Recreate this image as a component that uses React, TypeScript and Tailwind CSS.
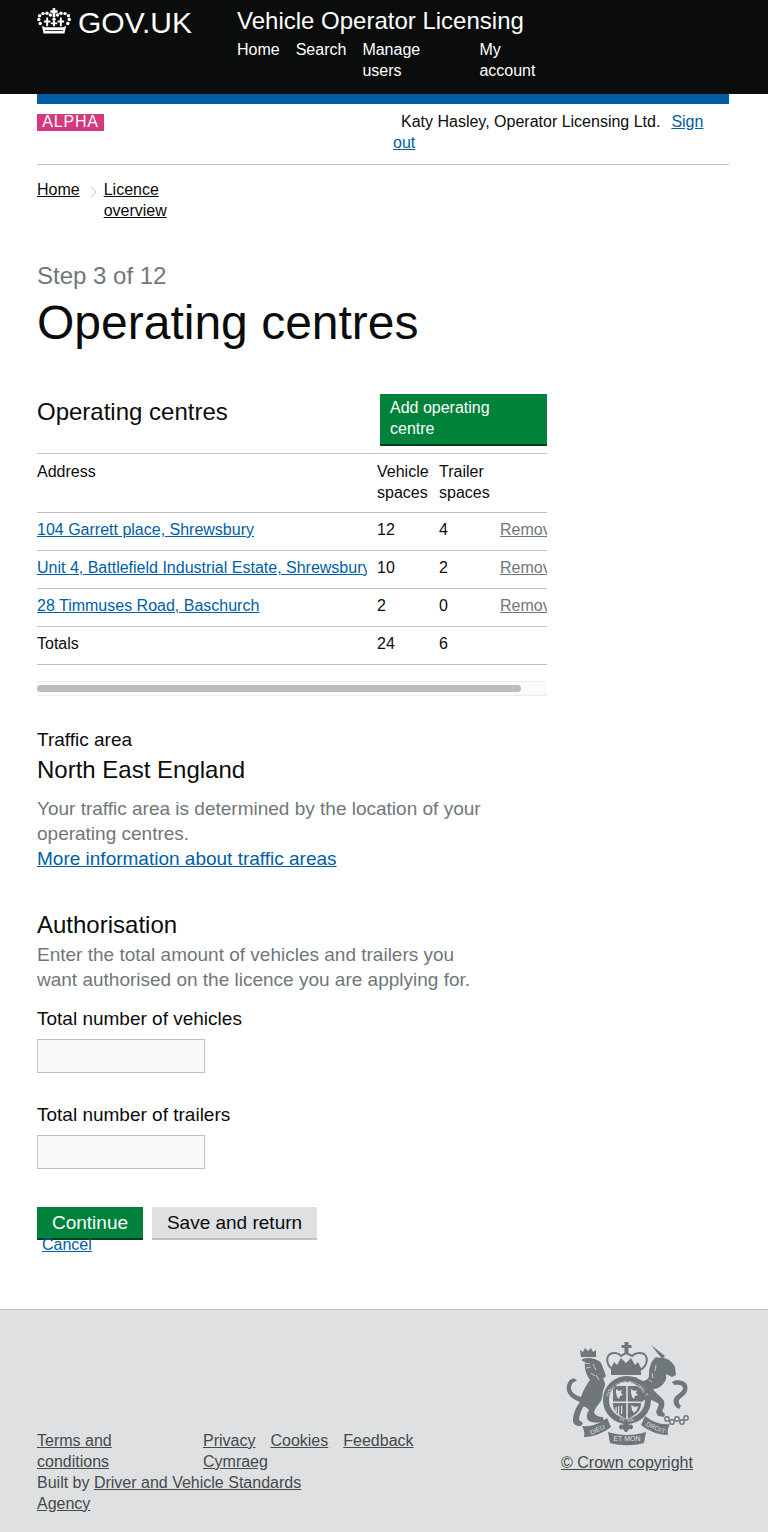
const FONT = "font-['Liberation_Sans',Arial,sans-serif]";

const Crown = () => (
  <svg width="34" height="26" viewBox="0 0 34 26" fill="#fff" className="shrink-0">
    <path d="M15.700 0h2.600v2.300h2.300v2.500h-2.300v4.500h-2.600V4.800h-2.300V2.300h2.300z" />
    {[
      [1.800, 11.500], [2.600, 7.800], [6, 5.600], [10, 5.200], [13.400, 7], [20.600, 7], [24, 5.200], [28, 5.600], [31.400, 7.800], [32.200, 11.500],
      [3.200, 15.500], [30.800, 15.500], [17, 11.200],
    ].map(([cx, cy]) => (
      <circle key={`${cx}-${cy}`} cx={cx} cy={cy} r="1.700" />
    ))}
    <path d="M9.200 9.500h1.900v3h2.300v1.900h-2.300v3.800H9.200v-3.800H6.900v-1.900h2.300zM16.050 13h1.900v1.400h2.300v1.900h-2.300v2h-1.900v-2h-2.300v-1.900h2.300zM22.900 9.500h1.900v3h2.300v1.900h-2.300v3.800h-1.900v-3.800h-2.300v-1.900h2.300z" />
    <path d="M4.800 17.500c1.200 1 2.500 1.800 4.200 1.800h16c1.700 0 3-.8 4.200-1.800L27.400 25.500H6.600z" />
    <path d="M8 22.200h18v.8H8z" fill="#0b0c0c" />
  </svg>
);

const Crest = () => (
  <svg width="126" height="104" viewBox="0 0 126 104" fill="#6f777b">
    <defs>
      <path id="garter" d="M43 62a20 20 0 1 1 40 0" />
      <path id="garter-low" d="M44 66a20 20 0 0 0 38 0" />
    </defs>
    {/* lion */}
    <path d="M17 15l-1-7 3 2 2-4 3 3 3-3 2 4 3-2 0 7z" />
    <path d="M18 17c6-2 15-1 19 4 2 4 3 8 5 13l-3 3c2 3 3 6 1 9-2 5-1 9-3 13-3 4-6 7-7 11 1 3 4 5 9 5l1 5c-7 1-13 1-16-2-2-3-1-7 1-10-2-2-4-4-6-3-2 4-4 9-4 13l4 3-2 3c-5 0-8-2-8-5 0-7 3-14 7-19-5-2-11-5-13-11-1-5 1-11 5-12 2-1 4 0 5 2-3 0-6 3-6 7 0 5 6 8 10 9 2-7 6-13 9-17-3-4-6-11-5-18-3-1-4-2-3-2z" />
    <path d="M21 21l5 1M22 26l5-1M29 22l3 6M27 31l4 3M32 33l3 5" fill="none" stroke="#dee0e2" strokeWidth="0.800" />
    {/* unicorn */}
    <path d="M87 3l14 11-3 3z" />
    <path d="M96 16c6-1 12 3 15 9l1 8-4 2-6-3c1 5-1 9-5 12-2 2-5 3-8 3 2 4 9 8 11 12 1 4 0 7-2 10l3 3-1 3-6-1-2-4 3-8c-5-4-10-5-15-4l-6 5-2-4 2-8 1-8c-2 1-4 0-6-2l-1-4 3-2c3 2 6 4 9 4 3-1 5-3 5-5 0-7 1-14 7-19z" />
    <path d="M92 23l-1 6M88 31l1 5M85 38l3 2M104 37l-4 4" fill="none" stroke="#dee0e2" strokeWidth="0.800" />
    <path d="M108 40c4-3 13-2 15 3 2 6-2 10-6 13-3 2-3 5 0 8l-2 3c-5-2-7-8-4-12 2-3 8-5 8-9 0-3-5-4-9-3z" />
    {[[103, 77], [108, 80], [113, 77], [118, 80], [122, 76]].map(([cx, cy]) => (
      <circle key={cx} cx={cx} cy={cy} r="2.200" fill="none" stroke="#6f777b" strokeWidth="1.400" />
    ))}
    {/* crown */}
    <path d="M60.500 0h4v3h3v3h-3v5h-4V6h-3V3h3z" />
    <path d="M48 27c-6-5-6-12-2-15 4-2 9-1 11 2l5-3 6 3c3-3 8-4 12-2 4 3 4 10-2 15-9-2-21-2-30 0z" fill="none" stroke="#6f777b" strokeWidth="2" />
    <path d="M47 26l3-6 3 3 4-7 5 5 5-5 4 7 3-3 3 6v7H47z" />
    {/* shield and garter */}
    <circle cx="63" cy="58" r="21" fill="none" stroke="#6f777b" strokeWidth="6" />
    <path d="M49 44h28v18c0 8-7 12-14 15-7-3-14-7-14-15z" />
    <path d="M62.200 44h1.600v33h-1.600zM49 59.500h28v1.600H49z" fill="#dee0e2" />
    <path d="M52 47l3 2 3-1-1 3 2 2-3 1-1 3-2-2-1-4zM67 47l3 2 3-1-1 3 2 2-3 1-1 3-2-2-1-4zM67 63l4 2 3-1-1 4-3 3-2-3zM54 64h1.200v9H54zM57 64h1.200v8H57zM51.500 65h1.200v5h-1.200z" fill="#dee0e2" />
    <text fontSize="4.600" fill="#dee0e2" fontFamily="Liberation Sans, Arial, sans-serif">
      <textPath href="#garter" startOffset="50%" textAnchor="middle">HONI SOIT QUI MAL Y</textPath>
    </text>
    <text fontSize="4.600" fill="#dee0e2" fontFamily="Liberation Sans, Arial, sans-serif">
      <textPath href="#garter-low" startOffset="50%" textAnchor="middle">PENSE</textPath>
    </text>
    {/* motto scrolls */}
    <path d="M18 84c9 1 17-2 25-8l4 9c-6 5-17 10-27 10 1-4 0-7-2-11zM106 82c-9 1-17-2-25-8l-4 9c6 5 17 10 27 10-1-4 0-7 2-11z" />
    <path d="M44 90c12 4 26 4 38 0l-2 11c-11 3-23 3-34 0z" />
    <path d="M62 77c2 2 3 4 3 6 2-1 4 0 4 2s-2 3-4 2l-2 3h-2l-2-3c-2 1-4 0-4-2s2-3 4-2c0-2 1-4 3-6z" />
    <text x="63" y="99" textAnchor="middle" fontSize="7" fill="#dee0e2" fontFamily="Liberation Sans, Arial, sans-serif">ET MON</text>
    <text x="33" y="90" fontSize="6.500" fill="#dee0e2" textAnchor="middle" transform="rotate(-24 33 87)" fontFamily="Liberation Sans, Arial, sans-serif">DIEU</text>
    <text x="92" y="88" fontSize="6.500" fill="#dee0e2" textAnchor="middle" transform="rotate(24 92 85)" fontFamily="Liberation Sans, Arial, sans-serif">DROIT</text>
  </svg>
);

const ROWS = [
  { address: "104 Garrett place, Shrewsbury", vehicles: 12, trailers: 4 },
  { address: "Unit 4, Battlefield Industrial Estate, Shrewsbury", vehicles: 10, trailers: 2 },
  { address: "28 Timmuses Road, Baschurch", vehicles: 2, trailers: 0 },
];

export default function App() {
  return (
    <div className={`${FONT} min-h-[1532px] bg-white text-[#0b0c0c]`}>
      {/* Header */}
      <header className="flex h-[94px] bg-[#0b0c0c] pl-[37px] text-white">
        <div className="flex w-[200px] items-start gap-[7px] pt-[5px]">
          <div className="pt-[3px]">
            <Crown />
          </div>
          <span className="text-[30px] leading-[36px]">GOV.UK</span>
        </div>
        <div className="w-[320px]">
          <div className="pt-[6px] text-[24px] leading-[29px]">Vehicle Operator Licensing</div>
          <nav className="mt-[4px] flex text-[16px] leading-[21px]">
            <a className="mr-[16px]">Home</a>
            <a className="mr-[16px]">Search</a>
            <a className="w-[117px]">Manage<br />users</a>
            <a>My<br />account</a>
          </nav>
        </div>
      </header>

      <div className="ml-[37px] mr-[39px]">
        <div className="h-[10px] bg-[#005ea5]" />

        {/* Phase banner */}
        <div className="flex h-[61px] border-b border-[#bfc1c3] pt-[7px]">
          <div className="w-[356px]">
            <span className="mt-[3px] block h-[17px] w-[67px] bg-[#d53880] text-center text-[16px] leading-[16px] tracking-[0.8px] text-white">
              ALPHA
            </span>
          </div>
          <div className="w-[330px] text-[16px] leading-[21px]">
            <span className="pl-[8px]">Katy Hasley, Operator Licensing Ltd.</span>
            <a className="ml-[11px] text-[#005ea5] underline">Sign out</a>
          </div>
        </div>

        {/* Breadcrumbs */}
        <nav className="mt-[14px] flex text-[16px] leading-[21px]">
          <a className="underline">Home</a>
          <svg width="7" height="12" viewBox="0 0 7 12" fill="none" stroke="#bfc1c3" strokeWidth="1" className="ml-[10px] mr-[7px] mt-[7px]">
            <path d="M1 1l5 5-5 5" />
          </svg>
          <a className="w-[70px] underline">Licence overview</a>
        </nav>

        {/* Heading */}
        <div className="mt-[40px] text-[24px] leading-[30px] text-[#6f777b]">Step 3 of 12</div>
        <h1 className="mt-[7px] text-[48px] leading-[50px]">Operating centres</h1>

        {/* Operating centres table */}
        <div className="mt-[46px] w-[510px]">
          <div className="flex h-[60px] border-b border-[#bfc1c3]">
            <h2 className="w-[343px] pt-[3px] text-[24px] leading-[30px]">Operating centres</h2>
            <a className="h-[52px] w-[167px] border-b-2 border-[#00401e] bg-[#00823b] px-[10px] pt-[3px] text-[16px] leading-[21px] text-white">
              Add operating centre
            </a>
          </div>
          <div className="overflow-hidden">
            <table className="w-[620px] table-fixed border-collapse text-[16px] leading-[21px]">
              <thead>
                <tr className="h-[58px] border-b border-[#bfc1c3] text-left align-top">
                  <th className="w-[340px] pt-[7px] font-normal">Address</th>
                  <th className="w-[62px] pt-[7px] font-normal">Vehicle<br />spaces</th>
                  <th className="w-[61px] pt-[7px] font-normal">Trailer<br />spaces</th>
                  <th className="font-normal" />
                </tr>
              </thead>
              <tbody>
                {ROWS.map((row) => (
                  <tr key={row.address} className="h-[38px] border-b border-[#bfc1c3]">
                    <td className="pb-[3px]">
                      <div className="w-[330px] overflow-hidden whitespace-nowrap">
                        <a className="text-[#005ea5] underline">{row.address}</a>
                      </div>
                    </td>
                    <td className="pb-[3px]">{row.vehicles}</td>
                    <td className="pb-[3px]">{row.trailers}</td>
                    <td className="pb-[3px]"><a className="text-[#6f777b] underline">Remove</a></td>
                  </tr>
                ))}
                <tr className="h-[38px] border-b border-[#bfc1c3]">
                  <td className="pb-[3px]">Totals</td>
                  <td className="pb-[3px]">24</td>
                  <td className="pb-[3px]">6</td>
                  <td />
                </tr>
              </tbody>
            </table>
          </div>
          {/* Scrollbar */}
          <div className="mt-[16px] h-[15px] border-y border-[#ededed] bg-[#fafafa] pt-[3px]">
            <div className="h-[7px] w-[484px] rounded-full bg-[#bdbdbd]" />
          </div>
        </div>

        {/* Traffic area */}
        <div className="mt-[31px] text-[19px] leading-[25px]">Traffic area</div>
        <div className="mt-[3px] text-[24px] leading-[30px]">North East England</div>
        <p className="mt-[11px] w-[450px] text-[19px] leading-[25px] text-[#6f777b]">
          Your traffic area is determined by the location of your operating centres.
        </p>
        <a className="block text-[19px] leading-[25px] text-[#005ea5] underline">More information about traffic areas</a>

        {/* Authorisation */}
        <h2 className="mt-[39px] text-[24px] leading-[30px]">Authorisation</h2>
        <p className="mt-[2px] w-[450px] text-[19px] leading-[25px] text-[#6f777b]">
          Enter the total amount of vehicles and trailers you want authorised on the licence you are applying for.
        </p>
        <label className="mt-[14px] block text-[19px] leading-[25px]">Total number of vehicles</label>
        <input className="mt-[8px] block h-[34px] w-[168px] border border-[#bfc1c3] bg-[#fafafa]" />
        <label className="mt-[29px] block text-[19px] leading-[25px]">Total number of trailers</label>
        <input className="mt-[8px] block h-[34px] w-[168px] border border-[#bfc1c3] bg-[#fafafa]" />

        {/* Actions */}
        <div className="mt-[38px] flex gap-[9px]">
          <button className="h-[33px] w-[106px] border-b-2 border-[#00401e] bg-[#00823b] text-[19px] leading-[25px] text-white">
            Continue
          </button>
          <button className="h-[33px] w-[165px] border-b-2 border-[#bfc1c3] bg-[#dee0e2] text-[19px] leading-[25px] text-[#0b0c0c]">
            Save and return
          </button>
        </div>
        <a className="-mt-[3px] ml-[5px] block h-[16px] text-[16px] leading-[16px] text-[#005ea5] underline">Cancel</a>
      </div>

      {/* Footer */}
      <footer className="mt-[56px] flex h-[223px] border-t border-[#bfc1c3] bg-[#dee0e2] pl-[37px] text-[16px] leading-[21px] text-[#454a4c]">
        <div className="w-[524px] pt-[120px]">
          <div className="flex">
            <div className="w-[166px]">
              <a className="block w-[90px] underline">Terms and conditions</a>
            </div>
            <div className="w-[230px]">
              <a className="mr-[15px] underline">Privacy</a>
              <a className="mr-[15px] underline">Cookies</a>
              <a className="underline">Feedback</a>
              <br />
              <a className="underline">Cymraeg</a>
            </div>
          </div>
          <div className="w-[300px]">
            Built by <a className="underline">Driver and Vehicle Standards Agency</a>
          </div>
        </div>
        <div className="flex w-[132px] flex-col items-center pt-[32px]">
          <Crest />
          <a className="mt-[6px] whitespace-nowrap underline">© Crown copyright</a>
        </div>
      </footer>
    </div>
  );
}
